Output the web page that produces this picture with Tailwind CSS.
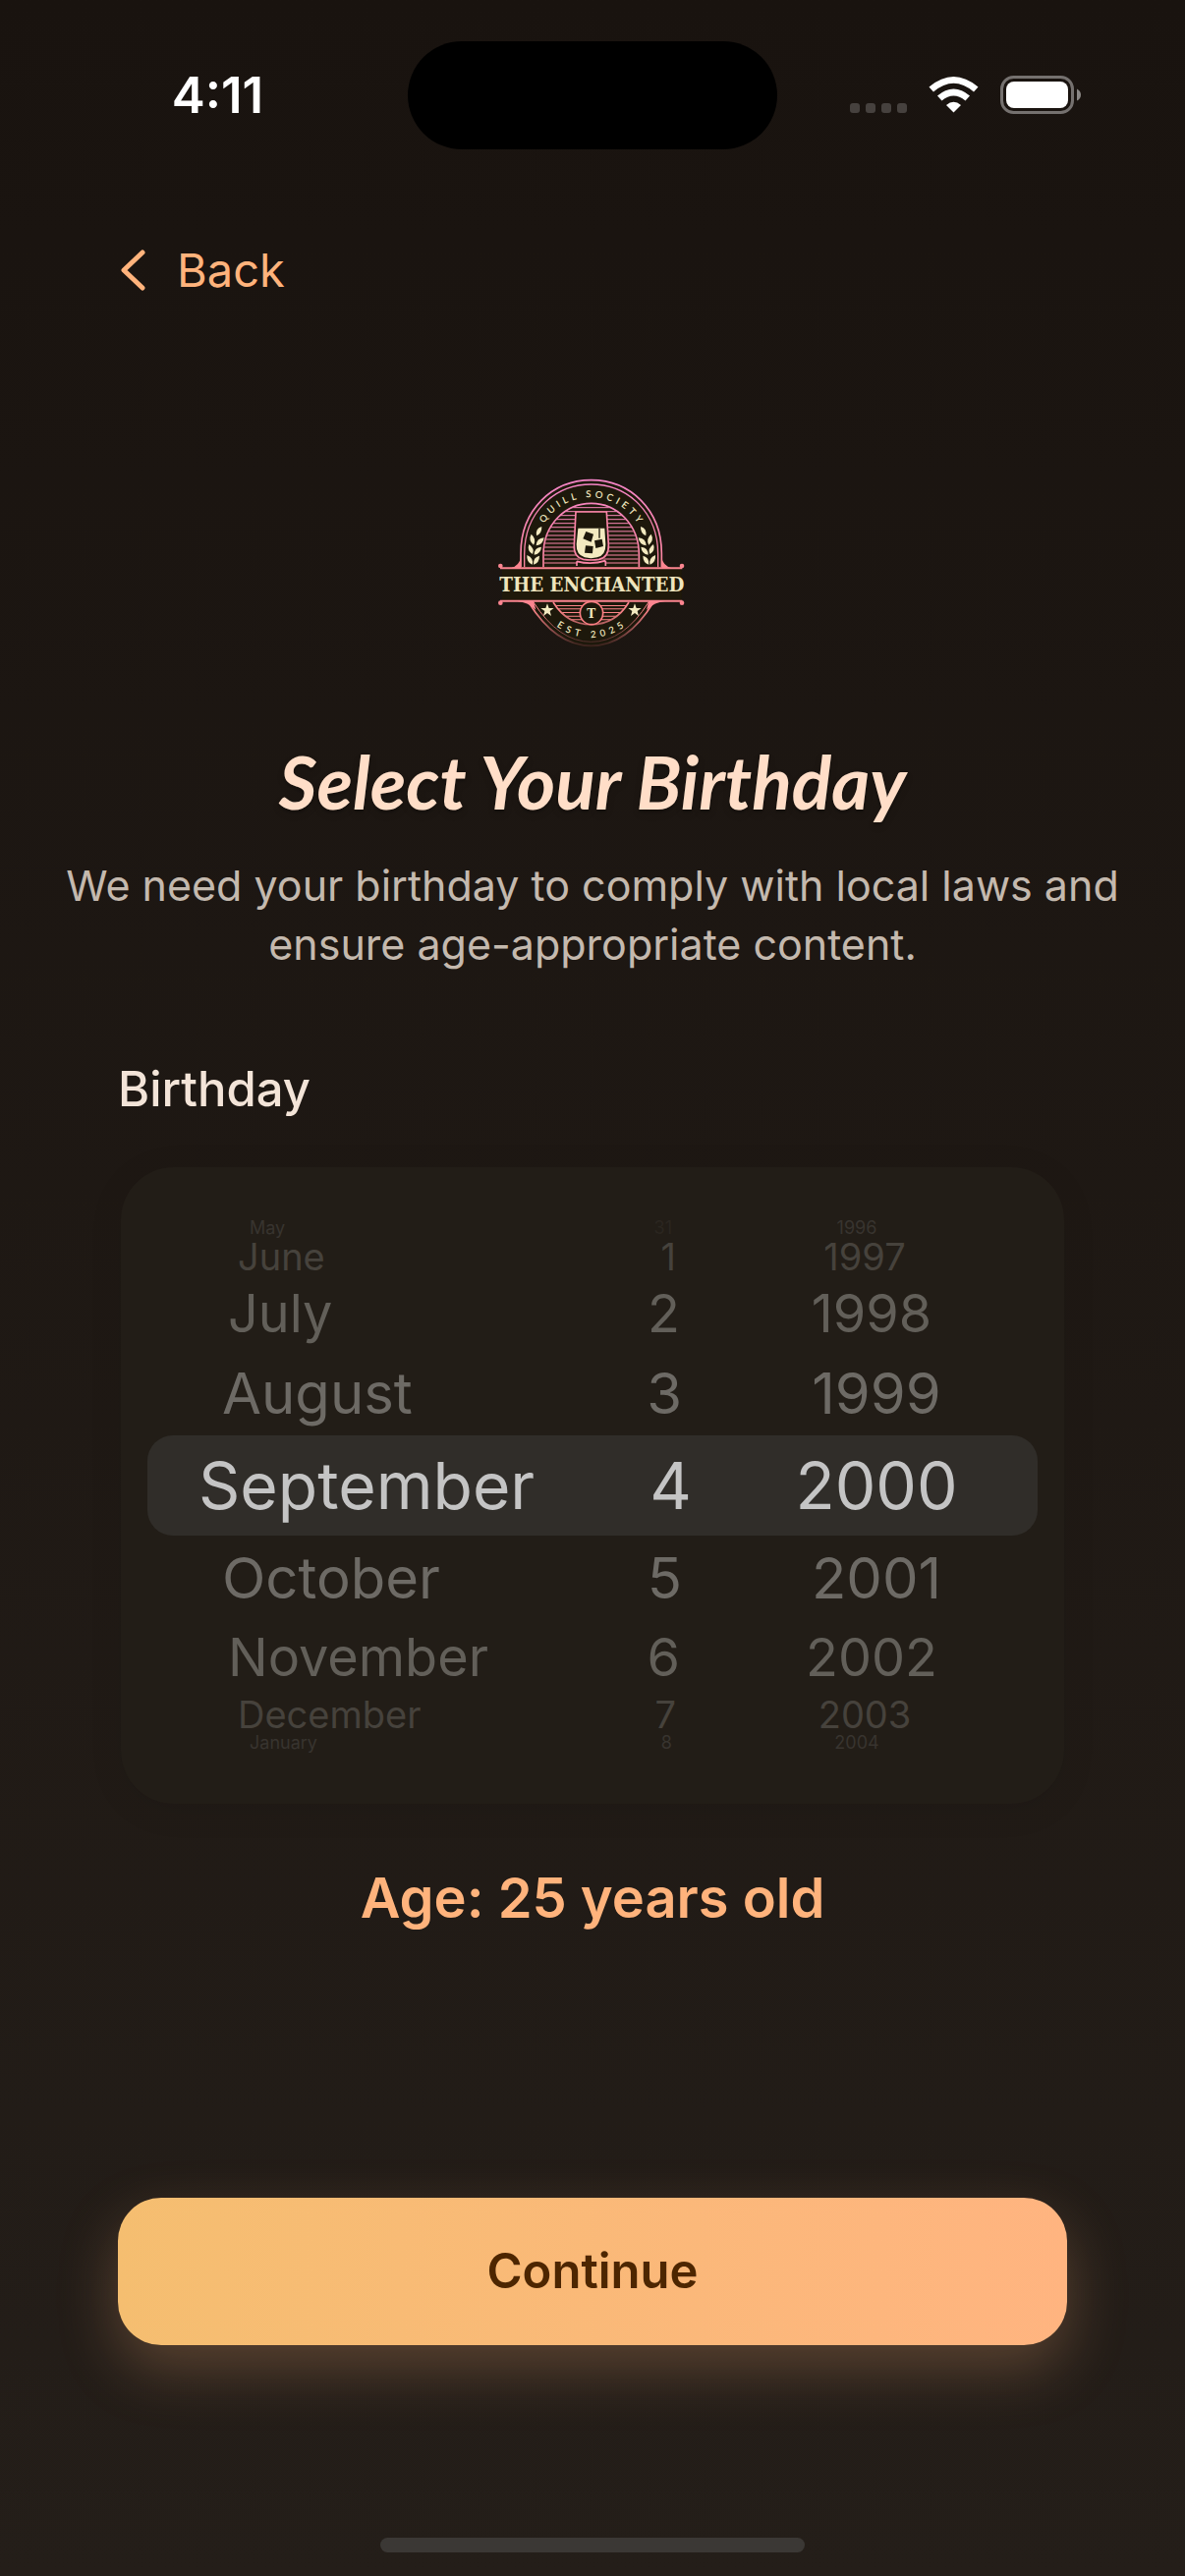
<!DOCTYPE html>
<html lang="en">
<head>
<meta charset="utf-8">
<meta name="viewport" content="width=device-width, initial-scale=1">
<title>Select Your Birthday</title>
<script src="https://cdn.jsdelivr.net/npm/@tailwindcss/browser@4"></script>
</head>
<body class="flex min-h-screen flex-col bg-linear-to-b from-[#19130f] to-[#241e19] font-['Inter',sans-serif] text-[#ffb37c]">

<!-- Status bar -->
<div class="mt-[42px] grid h-[110px] grid-cols-[1fr_376px_1fr] items-center text-white">
  <div class="pl-7 text-center text-[51px] leading-[60px] font-semibold">4:11</div>
  <div class="h-full rounded-full bg-black"></div>
  <div class="flex justify-end pr-[105px]">
    <svg class="h-[40px] w-[236px]" viewBox="0 0 236 40" aria-hidden="true">
      <g fill="#46413e"><rect x="0" y="28" width="10" height="10" rx="3"/><rect x="16" y="28" width="10" height="10" rx="3"/><rect x="32" y="28" width="10" height="10" rx="3"/><rect x="48" y="28" width="10" height="10" rx="3"/></g>
      <g fill="#fff">
        <path d="M80.500 11.500Q105.500 -9.500 130.500 11.500L126 16.500Q105.500 -1 85 16.500Z"/>
        <path d="M89 20.500Q105.500 6.500 122 20.500L117.500 25.500Q105.500 15.500 93.500 25.500Z"/>
        <path d="M98 30Q105.500 23.500 113 30L105.500 37.500Z"/>
        <rect x="159" y="6" width="63" height="27" rx="8"/>
      </g>
      <rect x="154.500" y="1.500" width="72" height="36" rx="12" fill="none" stroke="#75716f" stroke-width="3"/>
      <path d="M231 13.500Q235 15.500 235 19.500T231 25.500Z" fill="#8a8785"/>
    </svg>
  </div>
</div>

<nav class="mt-[93px] px-[120px]">
  <a href="#" class="inline-flex items-center gap-[32px] text-[47px] leading-[60px]">
    <svg class="h-[44px] w-[28px]" viewBox="0 0 28 44" fill="none" stroke="currentColor" stroke-width="5" stroke-linecap="round" stroke-linejoin="round" aria-hidden="true"><path d="M25 4 6 22l19 18"/></svg>
    Back
  </a>
</nav>

<main class="flex flex-1 flex-col">
  <header class="mt-[165px] flex flex-col items-center px-[60px] text-center">
    <svg class="h-[200px] w-[230px]" viewBox="-7 -2 690 600" role="img" aria-label="The Enchanted Quill Society">
      <defs>
        <linearGradient id="rose" gradientUnits="userSpaceOnUse" x1="0" y1="50" x2="0" y2="570">
          <stop offset="0" stop-color="#f484c8"/><stop offset=".5" stop-color="#fb85a0"/><stop offset=".77" stop-color="#fb8488"/><stop offset="1" stop-color="#2a1a14"/>
        </linearGradient>
        <clipPath id="arch"><path d="M190 318V282C190 190 255 126 334 126S478 190 478 282V318Z"/></clipPath>
        <clipPath id="bowl"><path d="M220 428Q265 495 334 495T447 428Z"/></clipPath>
        <path id="topArc" d="M165 275A168 168 0 0 1 501 275"/>
        <path id="lowArc" d="M159 361A174 174 0 0 0 507 361"/>
        <g id="laurel" fill="#f3eac0">
          <path d="M183 196Q163 202 167 224Q184 217 183 196Z"/>
          <path d="M151 219Q141 237 158 252Q168 234 151 219Z"/>
          <path d="M190 230Q167 232 166 254Q187 252 190 230Z"/>
          <path d="M144 250Q137 270 155 280Q163 264 144 250Z"/>
          <path d="M182 258Q160 260 160 282Q180 279 182 258Z"/>
          <path d="M138 283Q136 305 154 312Q160 293 138 283Z"/>
          <path d="M176 285Q156 290 158 312Q176 307 176 285Z"/>
        </g>
      </defs>
      <path d="M118 320V285C118 145 215 54 334 54S550 145 550 285V320ZM145 425Q230 565 334 565T522 425Z" fill="#1d180b"/>
      <rect x="62" y="322" width="548" height="100" fill="#1f190a"/>
      <g fill="none" stroke="url(#rose)" stroke-width="5">
        <path d="M119 320V278C119 145 215 54 334 54S549 145 549 278V320"/>
        <path stroke-width="4" d="M130 320V280C130 155 220 67 334 67S538 155 538 280V320"/>
        <path d="M188 320V282C188 190 255 125 334 125S480 190 480 282V320"/>
        <path d="M143 427Q225 560 334 560T524 427"/>
        <path stroke-width="3" d="M158 427Q235 548 334 548T509 427"/>
        <path d="M218 427Q260 495 334 495T449 427"/>
      </g>
      <g clip-path="url(#arch)" stroke="url(#rose)" stroke-width="3">
        <path d="M180 138H490.100M180 150H490.100M180 162H490.100M180 174H490.100M180 186H490.100M180 198H490.100M180 210.500H490.100M180 223H490.100M180 235H490.100M180 247H490.100M180 259H490.100M180 271H490.100M180 283H490.100M180 295H490.100M180 307H490.100"/>
      </g>
      <g clip-path="url(#bowl)" fill="#fb8488"><path d="M200 436h270v3H200zM200 446h270v3H200zM200 457h270v3H200zM200 468h270v3H200zM200 479h270v3H200z"/></g>
      <!-- Glass -->
      <path d="M286 150H382L389 255Q388 292 360 300L378 306V318H290V306L308 300Q280 290 281 255Z" fill="#1d180b"/>
      <path d="M287 151H381L387 252Q388 290 358 296Q334 300 310 296Q280 290 282 252ZM290 302Q334 314 378 300M290 302V316M378 300V316" fill="none" stroke="#fb85a6" stroke-width="5"/>
      <path d="M294 201H375L378 250Q379 284 352 290Q334 295 314 290Q288 282 289 250Z" fill="#f3eac0"/>
      <g fill="#1d180b"><path d="M318 211L341 219L334 243L309 233ZM344 239L367 234L371 256L348 262ZM317 254L340 256L338 278L314 276ZM357 201h4v30h-4z"/></g>
      <use href="#laurel"/>
      <use href="#laurel" transform="matrix(-1 0 0 1 668 0)"/>
      <path d="M56 323H612M56 423H612" stroke="#fb8590" stroke-width="6"/>
      <g fill="#fb8590">
        <circle cx="57" cy="316" r="7"/><circle cx="611" cy="316" r="7"/><circle cx="57" cy="429" r="7"/><circle cx="611" cy="429" r="7"/>
        <path d="M119 290V323H88Q115 316 119 290ZM549 290V323H580Q553 316 549 290ZM104 423H158L165 450Q142 426 104 423ZM564 423H510L503 450Q526 426 564 423Z"/>
      </g>
      <g fill="#f3eac0">
        <path d="M200 431L205 445H220L208 454L212 469L200 460L188 469L192 454L180 445H195Z"/>
        <path d="M467 431L472 445H487L475 454L479 469L467 460L455 469L459 454L447 445H462Z"/>
      </g>
      <circle cx="335" cy="460" r="35" fill="#1d180b" stroke="#fb7f83" stroke-width="5"/>
      <g fill="#efe5bd">
        <text x="334" y="474" text-anchor="middle" class="font-['DejaVu_Serif_Condensed','DejaVu_Serif',serif] text-[40px] font-bold">T</text>
        <text x="336" y="394" text-anchor="middle" class="font-['DejaVu_Serif_Condensed','DejaVu_Serif',serif] text-[61px] font-bold">THE ENCHANTED</text>
        <text class="font-['Lato',sans-serif] text-[29px] font-semibold tracking-[11px]"><textPath href="#topArc" startOffset="51%" text-anchor="middle">QUILL SOCIETY</textPath></text>
        <text class="font-['Lato',sans-serif] text-[29px] font-semibold tracking-[14px]"><textPath href="#lowArc" startOffset="51%" text-anchor="middle">EST 2025</textPath></text>
      </g>
    </svg>
    <h1 class="mt-[75px] font-['Lato',sans-serif] text-[75px] leading-[100px] font-bold text-[#ffdec8] italic text-shadow-lg">Select Your Birthday</h1>
    <p class="mt-[26px] text-[43px] leading-[60px] text-[#c4b9ae]">We need your birthday to comply with local laws and ensure age-appropriate content.</p>
  </header>

  <section class="mt-[88px] flex flex-col px-[120px]">
    <h2 id="birthday" class="text-[49px] leading-[60px] font-medium text-[#f3e4d8]">Birthday</h2>

    <!-- Date wheel -->
    <div role="group" aria-labelledby="birthday" class="mx-[3px] mt-[49px] rounded-[54px] bg-[#221d17] px-[27px] py-[53px] shadow-[0_6px_36px_rgba(0,0,0,0.08)]">
      <div class="relative grid grid-cols-[410px_144px_1fr]">
        <div class="absolute inset-x-0 top-[220px] h-[102px] rounded-[26px] bg-[#302d29]"></div>
        <fieldset aria-label="Month" class="relative flex flex-col text-[#6d6a65]">
          <label class="h-[18px] pl-[104px] text-[18px] leading-[18px] text-[#38342f]"><input class="sr-only" type="radio" name="month">May</label>
          <label class="h-[40px] pl-[92px] text-[38px] leading-[40px] text-[#46423c]"><input class="sr-only" type="radio" name="month">June</label>
          <label class="h-[76px] pl-[82px] text-[54px] leading-[76px] text-[#625f59]"><input class="sr-only" type="radio" name="month">July</label>
          <label class="h-[86px] pl-[76px] text-[58px] leading-[86px]"><input class="sr-only" type="radio" name="month">August</label>
          <label class="h-[102px] pl-[52px] text-[66px] leading-[102px] text-[#c4c4c4]"><input class="sr-only" type="radio" name="month" checked>September</label>
          <label class="h-[86px] pl-[76px] text-[58px] leading-[86px]"><input class="sr-only" type="radio" name="month">October</label>
          <label class="h-[76px] pl-[82px] text-[54px] leading-[76px] text-[#625f59]"><input class="sr-only" type="radio" name="month">November</label>
          <label class="h-[40px] pl-[92px] text-[38px] leading-[40px] text-[#46423c]"><input class="sr-only" type="radio" name="month">December</label>
          <label class="h-[18px] pl-[104px] text-[18px] leading-[18px] text-[#38342f]"><input class="sr-only" type="radio" name="month">January</label>
        </fieldset>
        <fieldset aria-label="Day" class="relative flex flex-col text-right text-[#6d6a65]">
          <label class="h-[18px] pr-[20px] text-[18px] leading-[18px] text-[#2b2620]"><input class="sr-only" type="radio" name="day">31</label>
          <label class="h-[40px] pr-[16px] text-[38px] leading-[40px] text-[#46423c]"><input class="sr-only" type="radio" name="day">1</label>
          <label class="h-[76px] pr-[12px] text-[54px] leading-[76px] text-[#625f59]"><input class="sr-only" type="radio" name="day">2</label>
          <label class="h-[86px] pr-[10px] text-[58px] leading-[86px]"><input class="sr-only" type="radio" name="day">3</label>
          <label class="h-[102px] text-[66px] leading-[102px] text-[#c4c4c4]"><input class="sr-only" type="radio" name="day" checked>4</label>
          <label class="h-[86px] pr-[10px] text-[58px] leading-[86px]"><input class="sr-only" type="radio" name="day">5</label>
          <label class="h-[76px] pr-[12px] text-[54px] leading-[76px] text-[#625f59]"><input class="sr-only" type="radio" name="day">6</label>
          <label class="h-[40px] pr-[16px] text-[38px] leading-[40px] text-[#46423c]"><input class="sr-only" type="radio" name="day">7</label>
          <label class="h-[18px] pr-[20px] text-[18px] leading-[18px] text-[#38342f]"><input class="sr-only" type="radio" name="day">8</label>
        </fieldset>
        <fieldset aria-label="Year" class="relative flex flex-col pl-[24px] text-center text-[#6d6a65]">
          <label class="h-[18px] pr-[40px] text-[18px] leading-[18px] text-[#38342f]"><input class="sr-only" type="radio" name="year">1996</label>
          <label class="h-[40px] pr-[24px] text-[38px] leading-[40px] text-[#46423c]"><input class="sr-only" type="radio" name="year">1997</label>
          <label class="h-[76px] pr-[10px] text-[54px] leading-[76px] text-[#625f59]"><input class="sr-only" type="radio" name="year">1998</label>
          <label class="h-[86px] text-[58px] leading-[86px]"><input class="sr-only" type="radio" name="year">1999</label>
          <label class="h-[102px] text-[66px] leading-[102px] text-[#c4c4c4]"><input class="sr-only" type="radio" name="year" checked>2000</label>
          <label class="h-[86px] text-[58px] leading-[86px]"><input class="sr-only" type="radio" name="year">2001</label>
          <label class="h-[76px] pr-[10px] text-[54px] leading-[76px] text-[#625f59]"><input class="sr-only" type="radio" name="year">2002</label>
          <label class="h-[40px] pr-[24px] text-[38px] leading-[40px] text-[#46423c]"><input class="sr-only" type="radio" name="year">2003</label>
          <label class="h-[18px] pr-[40px] text-[18px] leading-[18px] text-[#38342f]"><input class="sr-only" type="radio" name="year">2004</label>
        </fieldset>
      </div>
    </div>
    <p class="mt-[56px] text-center text-[56px] leading-[80px] font-semibold">Age: 25 years old</p>
  </section>

  <div class="mt-auto px-[120px] pb-[196px]">
    <button type="button" class="h-[150px] w-full rounded-[44px] bg-linear-to-r from-[#f5be70] to-[#ffb480] text-[49px] leading-[60px] font-semibold text-[#4d2600] shadow-[0_24px_60px_rgba(255,179,124,0.25)]">Continue</button>
  </div>
</main>

<div class="mx-auto mb-[24px] h-[15px] w-[432px] rounded-full bg-[#3b3835]"></div>
</body>
</html>
